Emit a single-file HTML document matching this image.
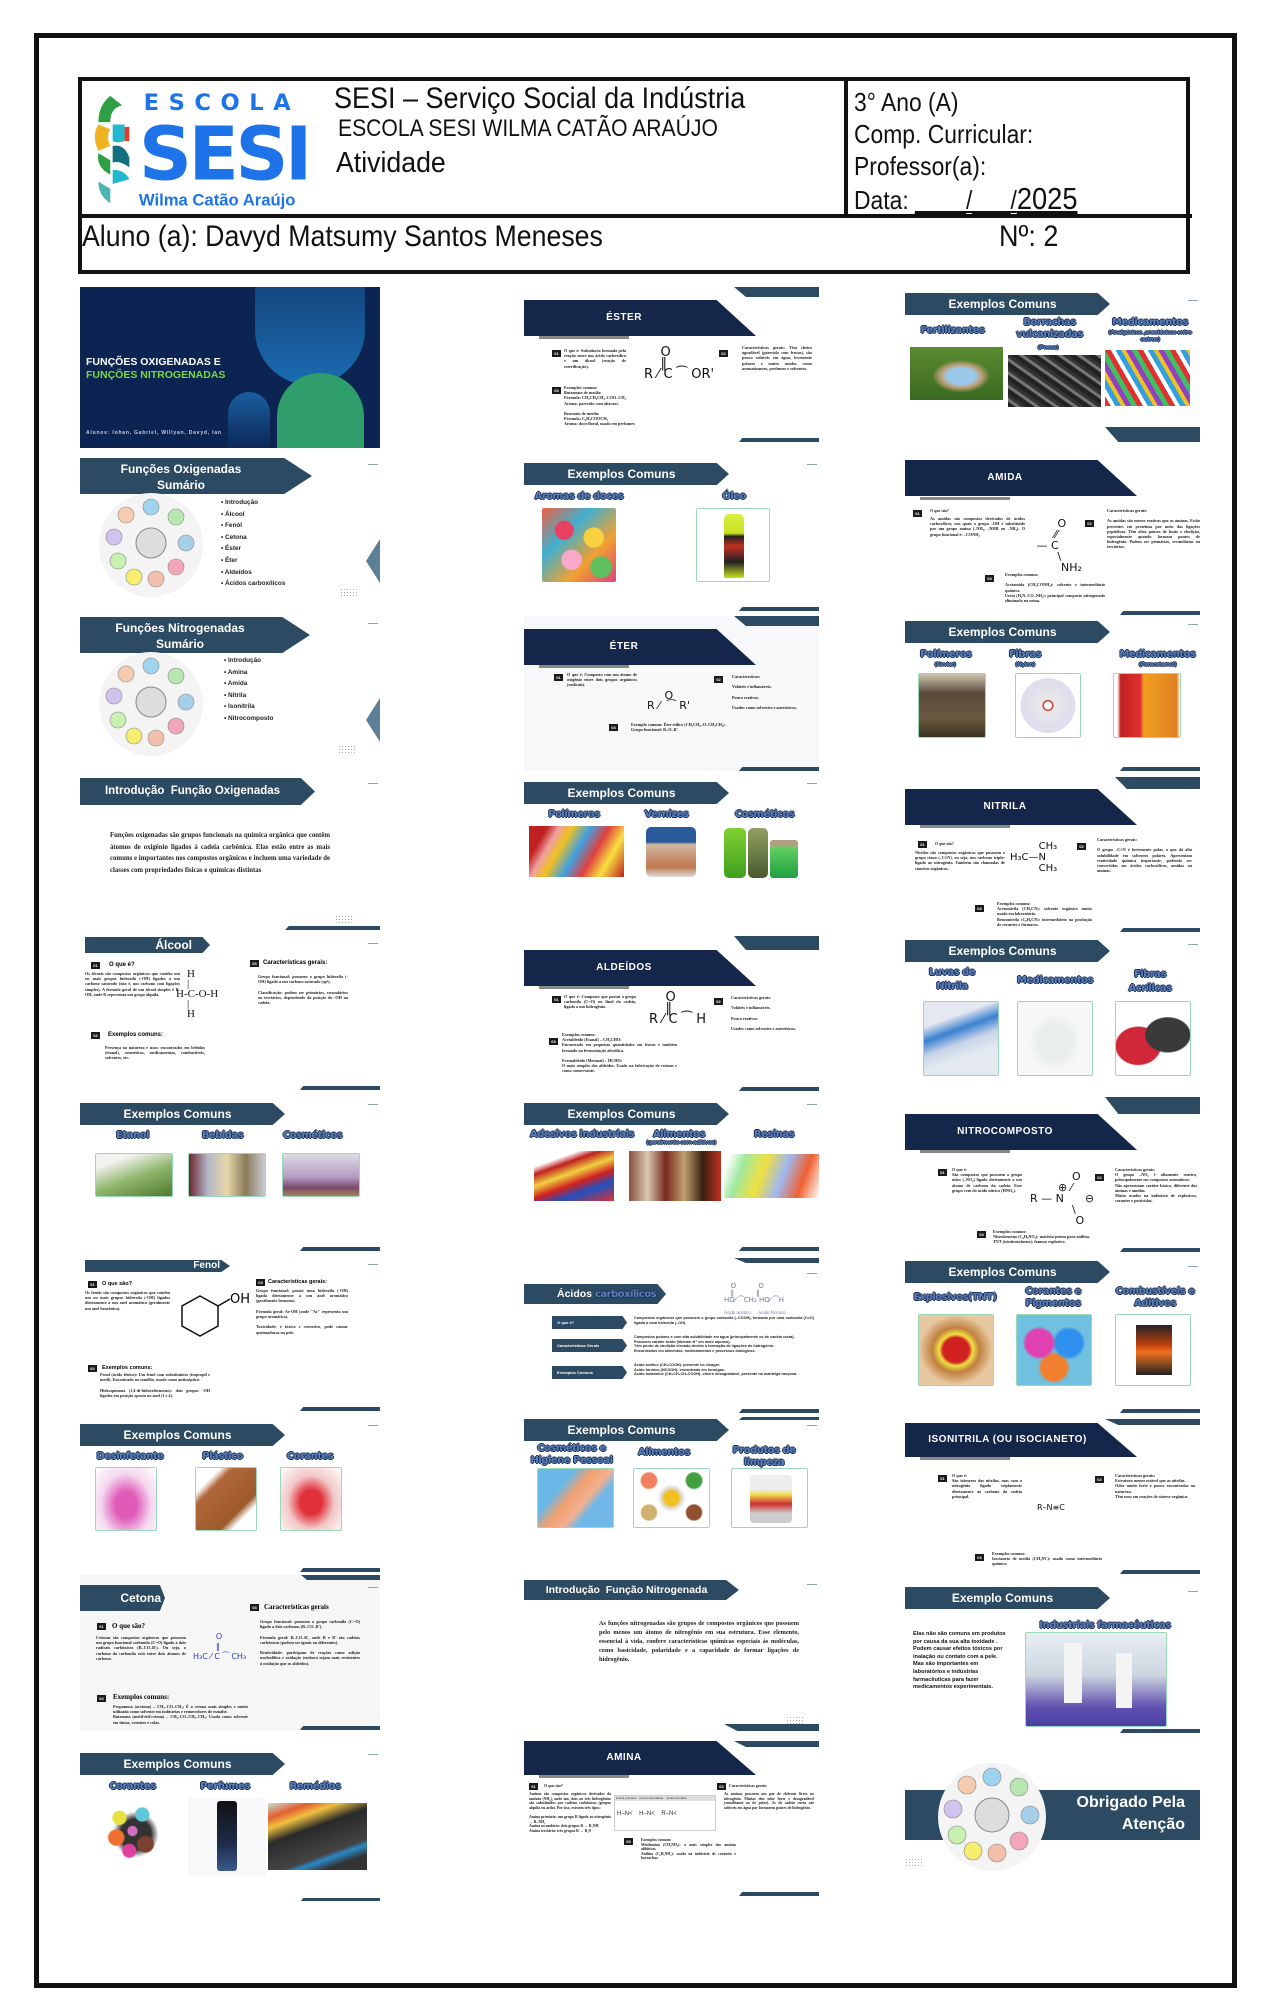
<!DOCTYPE html>
<html><head><meta charset="utf-8">
<style>
*{margin:0;padding:0;box-sizing:border-box}
body{width:1271px;height:2000px;background:#fff;position:relative;overflow:hidden;font-family:"Liberation Sans",sans-serif}
.frame{position:absolute;left:34px;top:33px;width:1203px;height:1955px;border:5px solid #111;border-top-width:5px}
.hdr{position:absolute;left:78px;top:77px;width:1112px;height:197px;border:4px solid #111}
.nar{font-family:"Liberation Sans Narrow","Liberation Sans",sans-serif;color:#111;position:absolute;white-space:nowrap;transform-origin:left top}
.s{position:absolute;height:155px;background:#fff;overflow:hidden}
.c1{left:80px;width:300px}.c2{left:524px;width:295px}.c3{left:905px;width:295px}
.tr{position:absolute;right:0;top:0;width:85px;height:10px;background:#2c4a62;clip-path:polygon(0 0,100% 0,100% 100%,14% 100%)}
.br{position:absolute;right:0;bottom:0;width:80px;height:4px;background:#2c4a62;clip-path:polygon(4% 0,100% 0,100% 100%,0 100%)}
.dash{position:absolute;right:2px;top:8px;width:10px;height:1px;background:#8aa}
.nh{position:absolute;left:0;top:13px;width:232px;height:36px;background:#14264a;clip-path:polygon(0 0,83% 0,100% 100%,0 100%);color:#fff;font-weight:bold;font-size:10px;letter-spacing:.5px}
.nh span{position:absolute;left:0;width:200px;text-align:center;top:12px}
.gb{position:absolute;left:15px;top:49px;width:90px;height:3px;background:#888}
.ban{position:absolute;left:0;top:7px;width:205px;height:22px;background:#2c4a62;clip-path:polygon(0 0,94% 0,100% 50%,94% 100%,0 100%);color:#fff;font-weight:bold;font-size:12px;text-align:center;line-height:22px;padding-right:10px}
.lb{position:absolute;font-family:"DejaVu Sans",sans-serif;font-weight:bold;font-size:10px;color:#5b80b8;text-align:center;letter-spacing:-.5px;text-shadow:-1px 0 #1e2f55,1px 0 #1e2f55,0 -1px #1e2f55,0 1px #1e2f55;line-height:11px}
.im{position:absolute;border:1px solid #9ad9b8;border-radius:2px}
.p{position:absolute;font-size:4.2px;line-height:5.2px;color:#222;font-weight:bold;text-align:justify;font-family:"Liberation Serif",serif}
.n{position:absolute;width:9px;height:7px;background:#1a1a1a;color:#fff;font-size:4px;line-height:7px;text-align:center;font-weight:bold}
.mol{position:absolute;font-size:12px;color:#111;font-family:"DejaVu Sans",sans-serif;white-space:pre;line-height:12px}
.dots{position:absolute;width:18px;height:8px;background-image:radial-gradient(#aab 0.6px,transparent 0.8px);background-size:3px 3px}
</style></head><body>
<div class="frame"></div>

<!-- HEADER -->
<div class="hdr">
 <div style="position:absolute;left:762px;top:0;width:4px;height:136px;background:#111"></div>
 <div style="position:absolute;left:0;top:133px;width:1110px;height:4px;background:#111"></div>
 <svg style="position:absolute;left:2px;top:3px" width="286" height="131" viewBox="0 0 240 110">
  <path d="M22 10 q-10 8 -10 22 l10 0 q0-12 10-14z" fill="#2ea043"/>
  <path d="M12 34 q-6 10 0 22 l10-4 q-4-8 0-14z" fill="#f0b323"/>
  <path d="M24 34 l10 0 l0 14 q-6 2-10 0z" fill="#23b8cf"/>
  <path d="M34 36 l4 0 l0 12 l-4 0z" fill="#e0402a"/>
  <path d="M24 52 q10-2 14 10 l0 8 q-8-6-14-4z" fill="#137080"/>
  <path d="M12 58 q-2 12 10 18 l0-12z" fill="#2ea043"/>
  <path d="M24 72 q10 0 14 8 l-14 4z" fill="#23b8cf"/>
  <path d="M12 82 q0 12 10 18 l0-12z" fill="#4bb7b0"/>
  <text x="50" y="22" font-family="DejaVu Sans" font-weight="bold" font-size="19" fill="#1e73e8" letter-spacing="8">ESCOLA</text>
  <text x="46" y="80" font-family="DejaVu Sans" font-weight="bold" font-size="62" fill="#1e73e8" letter-spacing="-3">SESI</text>
  <text x="46" y="102" font-family="Liberation Sans Narrow, Liberation Sans" font-weight="bold" font-size="14" fill="#1e73e8">Wilma Catão Araújo</text>
 </svg>
 <div class="nar" style="left:252px;top:1px;font-size:30px;transform:scaleX(.9)">SESI – Serviço Social da Indústria</div>
 <div class="nar" style="left:256px;top:34px;font-size:24px;transform:scaleX(.88)">ESCOLA SESI WILMA CATÃO ARAÚJO</div>
 <div class="nar" style="left:254px;top:66px;font-size:29px;transform:scaleX(.92)">Atividade</div>
 <div class="nar" style="left:772px;top:6px;font-size:26px;transform:scaleX(.88)">3° Ano (A)</div>
 <div class="nar" style="left:772px;top:38px;font-size:26px;transform:scaleX(.88)">Comp. Curricular:</div>
 <div class="nar" style="left:772px;top:70px;font-size:26px;transform:scaleX(.88)">Professor(a):</div>
 <div class="nar" style="left:772px;top:100px;font-size:26px;transform:scaleX(.88)">Data: <u>____/___/</u><span style="font-size:31px"><u>2025</u></span></div>
 <div class="nar" style="left:0;top:139px;font-size:30px;transform:scaleX(.89)">Aluno (a): Davyd Matsumy Santos Meneses</div>
 <div class="nar" style="left:917px;top:139px;font-size:30px;transform:scaleX(.9)">Nº: 2</div>
</div>

<!-- ===== COLUMN 1 ===== -->
<div class="s c1" style="top:287px;height:161px;background:#0b2452">
 <div style="position:absolute;left:175px;top:0;width:110px;height:98px;background:linear-gradient(#14477f,#1a6cb0);border-radius:0 0 55px 55px"></div>
 <div style="position:absolute;left:197px;top:86px;width:87px;height:80px;background:#2f9e6a;border-radius:44px 44px 0 0"></div>
 <div style="position:absolute;left:148px;top:105px;width:42px;height:60px;background:linear-gradient(#1a5fa0,#0b2452);border-radius:21px 21px 0 0"></div>
 <div style="position:absolute;left:6px;top:69px;color:#fff;font-weight:bold;font-size:10.5px;line-height:13px">FUNÇÕES OXIGENADAS E<br><span style="color:#7dd640">FUNÇÕES NITROGENADAS</span></div>
 <div style="position:absolute;left:6px;top:143px;color:#ccd;font-size:5px;letter-spacing:.8px;font-weight:bold">Alunos: Iohan, Gabriel, Willyan, Davyd, Ian</div>
</div>

<div class="s c1" style="top:456px">
 <div class="dash"></div>
 <div style="position:absolute;left:0;top:2px;width:232px;height:36px;background:#2c4a62;clip-path:polygon(0 0,88% 0,100% 50%,88% 100%,0 100%);color:#fff;font-weight:bold;font-size:12px;text-align:center;line-height:16px;padding:3px 30px 0 0">Funções Oxigenadas<br>Sumário</div>
 <svg style="position:absolute;left:14px;top:37px" width="115" height="105" viewBox="0 0 115 105"><circle cx="57" cy="52" r="52" fill="#f4f4f4"/><circle cx="57" cy="50" r="15" fill="#ddd" stroke="#888"/><g stroke="#888" stroke-width=".6"><circle cx="57" cy="14" r="8" fill="#9fd4f0"/><circle cx="82" cy="24" r="8" fill="#b8e6b0"/><circle cx="92" cy="50" r="8" fill="#a6d0ea"/><circle cx="82" cy="74" r="8" fill="#f2a6b8"/><circle cx="62" cy="86" r="8" fill="#f2c0aa"/><circle cx="40" cy="84" r="8" fill="#f7ee70"/><circle cx="24" cy="68" r="8" fill="#c8f0b0"/><circle cx="20" cy="44" r="8" fill="#d0c4ef"/><circle cx="32" cy="22" r="8" fill="#f7cbb0"/></g></svg>
 <div style="position:absolute;left:141px;top:41px;font-size:6.4px;font-weight:bold;line-height:11.6px;color:#222">• Introdução<br>• Álcool<br>• Fenól<br>• Cetona<br>• Éster<br>• Éter<br>• Aldeídos<br>• Ácidos carboxílicos</div>
 <div style="position:absolute;right:0;top:83px;width:14px;height:44px;background:#5a7f96;clip-path:polygon(100% 0,100% 100%,0 50%)"></div>
 <div class="dots" style="left:260px;top:132px"></div>
</div>

<div class="s c1" style="top:615px">
 <div class="dash"></div>
 <div style="position:absolute;left:0;top:2px;width:230px;height:36px;background:#2c4a62;clip-path:polygon(0 0,88% 0,100% 50%,88% 100%,0 100%);color:#fff;font-weight:bold;font-size:12px;text-align:center;line-height:16px;padding:3px 30px 0 0">Funções Nitrogenadas<br>Sumário</div>
 <svg style="position:absolute;left:14px;top:37px" width="115" height="105" viewBox="0 0 115 105"><circle cx="57" cy="52" r="52" fill="#f4f4f4"/><circle cx="57" cy="50" r="15" fill="#ddd" stroke="#888"/><g stroke="#888" stroke-width=".6"><circle cx="57" cy="14" r="8" fill="#9fd4f0"/><circle cx="82" cy="24" r="8" fill="#b8e6b0"/><circle cx="92" cy="50" r="8" fill="#a6d0ea"/><circle cx="82" cy="74" r="8" fill="#f2a6b8"/><circle cx="62" cy="86" r="8" fill="#f2c0aa"/><circle cx="40" cy="84" r="8" fill="#f7ee70"/><circle cx="24" cy="68" r="8" fill="#c8f0b0"/><circle cx="20" cy="44" r="8" fill="#d0c4ef"/><circle cx="32" cy="22" r="8" fill="#f7cbb0"/></g></svg>
 <div style="position:absolute;left:144px;top:40px;font-size:6.4px;font-weight:bold;line-height:11.6px;color:#222">• Introdução<br>• Amina<br>• Amida<br>• Nitrila<br>• Isonitrila<br>• Nitrocomposto</div>
 <div style="position:absolute;right:0;top:83px;width:14px;height:44px;background:#5a7f96;clip-path:polygon(100% 0,100% 100%,0 50%)"></div>
 <div class="dots" style="left:258px;top:130px"></div>
</div>

<div class="s c1" style="top:775px">
 <div class="dash"></div>
 <div class="ban" style="top:3px;width:235px;height:27px;line-height:27px;font-size:11.5px">Introdução&nbsp; Função Oxigenadas</div>
 <div class="p" style="left:30px;top:55px;width:220px;font-size:6.8px;line-height:11.5px">Funções oxigenadas são grupos funcionais na química orgânica que contêm átomos de oxigênio ligados à cadeia carbônica. Elas estão entre as mais comuns e importantes nos compostos orgânicos e incluem uma variedade de classes com propriedades físicas e químicas distintas</div>
 <div class="dots" style="left:255px;top:140px"></div><div class="br" style="width:95px"></div>
</div>

<div class="s c1" style="top:935px">
 <div class="dash"></div>
 <div class="ban" style="left:5px;width:125px;top:2px;height:16px;line-height:16px;text-align:right;padding-right:18px">Álcool</div>
 <div class="n" style="left:11px;top:27px">01</div><div style="position:absolute;left:29px;top:27px;font-size:6px;font-weight:bold">O que é?</div>
 <div class="p" style="left:5px;top:36px;width:95px">Os álcoois são compostos orgânicos que contêm um ou mais grupos hidroxila (-OH) ligados a um carbono saturado (isto é, um carbono com ligações simples). A fórmula geral de um álcool simples é R-OH, onde R representa um grupo alquila.</div>
 <div class="mol" style="left:96px;top:34px;font-family:'Liberation Serif',serif;font-size:11px;line-height:10px">    H
    |
H-C-O-H
    |
    H</div>
 <div class="n" style="left:170px;top:25px">03</div><div style="position:absolute;left:183px;top:25px;font-size:6px;font-weight:bold">Características gerais:</div>
 <div class="p" style="left:178px;top:39px;width:90px">Grupo funcional: possuem o grupo hidroxila (-OH) ligado a um carbono saturado (sp³).<br><br>Classificação: podem ser primários, secundários ou terciários, dependendo da posição do -OH na cadeia.</div>
 <div class="n" style="left:11px;top:97px">02</div><div style="position:absolute;left:28px;top:97px;font-size:6px;font-weight:bold">Exemplos comuns:</div>
 <div class="p" style="left:25px;top:110px;width:100px">Presença na natureza e usos: encontrados em bebidas (etanol), cosméticos, medicamentos, combustíveis, solventes, etc.</div>
 <div class="br"></div>
</div>

<div class="s c1" style="top:1096px">
 <div class="dash"></div><div class="ban">Exemplos Comuns</div>
 <div class="lb" style="left:25px;top:34px;width:55px">Etanol</div>
 <div class="lb" style="left:115px;top:34px;width:55px">Bebidas</div>
 <div class="lb" style="left:195px;top:34px;width:75px">Cosméticos</div>
 <div class="im" style="left:15px;top:57px;width:78px;height:44px;background:linear-gradient(160deg,#f2f2ef 20%,#8fb56b 55%,#4e7b2e)"></div>
 <div class="im" style="left:108px;top:57px;width:78px;height:44px;background:linear-gradient(90deg,#6b2630,#b4b8c8,#e6d6a8,#8a7a5a,#c9ccd4)"></div>
 <div class="im" style="left:202px;top:57px;width:78px;height:44px;background:linear-gradient(#dcdce6,#b59ac0 55%,#7a4a6e 80%,#a4835a)"></div>
 <div class="br"></div>
</div>

<div class="s c1" style="top:1256px">
 <div class="dash"></div>
 <div class="ban" style="left:5px;width:145px;top:4px;height:12px;line-height:12px;font-size:10px;text-align:right;padding-right:10px">Fenol</div>
 <div class="n" style="left:8px;top:25px">01</div><div style="position:absolute;left:22px;top:25px;font-size:5.5px;font-weight:bold">O que são?</div>
 <div class="p" style="left:5px;top:34px;width:85px">Os fenóis são compostos orgânicos que contêm um ou mais grupos hidroxila (-OH) ligados diretamente a um anel aromático (geralmente um anel benzênico).</div>
 <svg style="position:absolute;left:98px;top:32px" width="72" height="55"><polygon points="22,8 40,18 40,38 22,48 4,38 4,18" fill="none" stroke="#111" stroke-width="1.5"/><line x1="40" y1="18" x2="52" y2="11" stroke="#111" stroke-width="1.5"/><text x="52" y="15" font-size="13" font-family="DejaVu Sans">OH</text></svg>
 <div class="n" style="left:176px;top:23px">03</div><div style="position:absolute;left:188px;top:23px;font-size:5.5px;font-weight:bold">Características gerais:</div>
 <div class="p" style="left:176px;top:32px;width:92px">Grupo funcional: possui uma hidroxila (-OH) ligada diretamente a um anel aromático (geralmente benzeno).<br><br>Fórmula geral: Ar-OH (onde "Ar" representa um grupo aromático).<br><br>Toxicidade: é tóxico e corrosivo, pode causar queimaduras na pele.</div>
 <div class="n" style="left:8px;top:109px">02</div><div style="position:absolute;left:22px;top:109px;font-size:5.5px;font-weight:bold">Exemplos comuns:</div>
 <div class="p" style="left:20px;top:116px;width:110px">Fenol (ácido fênico): Um fenol com substituintes (isopropil e metil). Encontrado no tomilho, usado como antisséptico.<br><br>Hidroquinona (1,4-di-hidroxibenzeno): dois grupos -OH ligados em posição oposta no anel (1 e 4).</div>
 <div class="br"></div>
</div>

<div class="s c1" style="top:1417px">
 <div class="dash"></div><div class="ban">Exemplos Comuns</div>
 <div class="lb" style="left:10px;top:34px;width:80px">Desinfetante</div>
 <div class="lb" style="left:115px;top:34px;width:55px">Plástico</div>
 <div class="lb" style="left:200px;top:34px;width:60px">Corantes</div>
 <div class="im" style="left:15px;top:50px;width:62px;height:64px;background:radial-gradient(ellipse at 50% 60%,#e05ab8 25%,#f4d8ef 60%,#fff)"></div>
 <div class="im" style="left:115px;top:50px;width:62px;height:64px;background:linear-gradient(135deg,#fff 20%,#b0683a 30%,#9c5a2a 70%,#fff 80%)"></div>
 <div class="im" style="left:200px;top:50px;width:62px;height:64px;background:radial-gradient(ellipse at 50% 55%,#e0303a 25%,#f2c8c8 55%,#fff)"></div>
 <div class="br"></div>
</div>

<div class="s c1" style="top:1575px;background:#f6f6f7">
 <div class="tr" style="top:-5px"></div><div class="dash" style="top:12px"></div>
 <div class="ban" style="left:0;top:10px;width:85px;height:26px;line-height:26px;font-size:12px;text-align:right;padding-right:4px">Cetona</div>
 <div class="n" style="left:17px;top:48px">01</div><div style="position:absolute;left:32px;top:47px;font-size:7px;font-family:'Liberation Serif',serif;font-weight:bold">O que são?</div>
 <div class="p" style="left:16px;top:60px;width:90px">Cetonas são compostos orgânicos que possuem um grupo funcional carbonila (C=O) ligado a dois radicais carbônicos (R–CO–R'). Ou seja, o carbono da carbonila está entre dois átomos de carbono.</div>
 <div class="mol" style="left:113px;top:57px;color:#2a39b8;font-size:8px;line-height:10px">         O
         ‖
H₃C ⁄ C ⁀ CH₃</div>
 <div class="n" style="left:170px;top:29px">03</div><div style="position:absolute;left:184px;top:28px;font-size:7px;font-family:'Liberation Serif',serif;font-weight:bold">Características gerais</div>
 <div class="p" style="left:180px;top:44px;width:100px">Grupo funcional: possuem o grupo carbonila (C=O) ligado a dois carbonos (R–CO–R').<br><br>Fórmula geral: R–CO–R', onde R e R' são cadeias carbônicas (podem ser iguais ou diferentes).<br><br>Reatividade: participam de reações como adição nucleofílica e oxidação (embora sejam mais resistentes à oxidação que os aldeídos).</div>
 <div class="n" style="left:17px;top:120px">02</div><div style="position:absolute;left:33px;top:118px;font-size:7px;font-family:'Liberation Serif',serif;font-weight:bold">Exemplos comuns:</div>
 <div class="p" style="left:33px;top:129px;width:135px">Propanona (acetona) – CH₃–CO–CH₃: É a cetona mais simples e muito utilizada como solvente em indústrias e removedores de esmalte.<br>Butanona (metil-etil-cetona) – CH₃–CO–CH₂–CH₃: Usada como solvente em tintas, vernizes e colas.</div>
 <div class="br"></div>
</div>

<div class="s c1" style="top:1746px">
 <div class="dash"></div><div class="ban">Exemplos Comuns</div>
 <div class="lb" style="left:25px;top:35px;width:55px">Corantes</div>
 <div class="lb" style="left:115px;top:35px;width:60px">Perfumes</div>
 <div class="lb" style="left:205px;top:35px;width:60px">Remédios</div>
 <div style="position:absolute;left:20px;top:52px;width:65px;height:66px;background:radial-gradient(circle at 30% 30%,#e8e040 10%,transparent 12%),radial-gradient(circle at 65% 25%,#60c8d8 10%,transparent 12%),radial-gradient(circle at 25% 60%,#f07030 12%,transparent 14%),radial-gradient(circle at 50% 50%,#d070c0 10%,transparent 12%),radial-gradient(circle at 70% 70%,#7a4030 12%,transparent 14%),radial-gradient(circle at 45% 80%,#e040a0 10%,transparent 12%),radial-gradient(circle at 55% 55%,#333 30%,transparent 45%)"></div>
 <div style="position:absolute;left:108px;top:52px;width:78px;height:78px;background:#f8f8fa"><div style="position:absolute;left:29px;top:3px;width:20px;height:70px;border-radius:3px;background:linear-gradient(#111,#1d2a4a 60%,#3a5a8a)"></div></div>
 <div style="position:absolute;left:188px;top:57px;width:99px;height:67px;background:linear-gradient(160deg,#c8e0d8 0%,#e06030 15%,#efc040 25%,#2a2a2a 40%,#444 70%,#2a88c8 75%,#333 85%)"></div>
 <div class="br" style="bottom:-1px"></div>
</div>

<!-- ===== COLUMN 2 ===== -->
<div class="s c2" style="top:287px">
 <div class="tr" style="top:0"></div>
 <div class="nh"><span>ÉSTER</span></div><div class="gb"></div>
 <div class="n" style="left:28px;top:63px">01</div><div class="p" style="left:40px;top:61px;width:62px">O que é: Substância formada pela reação entre um ácido carboxílico e um álcool (reação de esterificação).</div>
 <div class="mol" style="left:120px;top:60px;font-size:13px;line-height:11px">    O
    ‖
R ⁄ C ⁀ OR'</div>
 <div class="n" style="left:195px;top:63px">02</div><div class="p" style="left:218px;top:58px;width:70px">Características gerais: Têm cheiro agradável (parecido com frutas), são pouco solúveis em água, levemente polares e muito usados como aromatizantes, perfumes e solventes.</div>
 <div class="n" style="left:28px;top:100px">03</div><div class="p" style="left:40px;top:98px;width:100px">Exemplos comuns:<br>Butanoato de metila:<br>Fórmula: CH₃CH₂CH₂–COO–CH₃<br>Aroma: parecido com abacaxi.<br><br>Benzoato de metila:<br>Fórmula: C₆H₅COOCH₃<br>Aroma: doce/floral, usado em perfumes</div>
 <div class="br"></div>
</div>

<div class="s c2" style="top:456px">
 <div class="dash"></div><div class="ban">Exemplos Comuns</div>
 <div class="lb" style="left:0;top:35px;width:110px">Aromas de doces</div>
 <div class="lb" style="left:185px;top:35px;width:50px">Óleo</div>
 <div class="im" style="left:18px;top:52px;width:74px;height:74px;border:none;background:radial-gradient(circle at 30% 30%,#e84060 12%,transparent 14%),radial-gradient(circle at 70% 40%,#f8d040 14%,transparent 16%),radial-gradient(circle at 40% 70%,#f8a8c8 14%,transparent 16%),radial-gradient(circle at 80% 80%,#60c060 12%,transparent 14%),linear-gradient(135deg,#f06040,#40b0d0,#f0a030,#e04080)"></div>
 <div class="im" style="left:172px;top:52px;width:74px;height:74px;background:#fff"><div style="position:absolute;left:27px;top:5px;width:20px;height:64px;border-radius:5px 5px 2px 2px;background:linear-gradient(#d8f040,#c8e020 30%,#222 35%,#c03020 50%,#222 75%,#c8e020)"></div></div>
 <div class="br"></div>
</div>

<div class="s c2" style="top:616px;background:#f7f8fa">
 <div class="tr"></div>
 <div class="nh"><span>ÉTER</span></div><div class="gb"></div>
 <div class="n" style="left:30px;top:58px">01</div><div class="p" style="left:43px;top:56px;width:70px">O que é: Composto com um átomo de oxigênio entre dois grupos orgânicos (radicais).</div>
 <div class="mol" style="left:123px;top:75px;font-size:11px;line-height:10px">     O
R ⁄  ⁀ R'</div>
 <div class="n" style="left:190px;top:60px">02</div><div class="p" style="left:208px;top:58px;width:70px">Características:<br><br>Voláteis e inflamáveis.<br><br>Pouco reativos.<br><br>Usados como solventes e anestésicos.</div>
 <div class="n" style="left:85px;top:108px">03</div><div class="p" style="left:107px;top:106px;width:100px">Exemplo comum: Éter etílico (CH₃CH₂–O–CH₂CH₃).<br>Grupo funcional: R–O–R'</div>
 <div class="br"></div>
</div>

<div class="s c2" style="top:775px">
 <div class="dash"></div><div class="ban">Exemplos Comuns</div>
 <div class="lb" style="left:20px;top:34px;width:60px">Polímeros</div>
 <div class="lb" style="left:115px;top:34px;width:55px">Vernizes</div>
 <div class="lb" style="left:203px;top:34px;width:75px">Cosméticos</div>
 <div style="position:absolute;left:5px;top:51px;width:95px;height:51px;background:linear-gradient(120deg,#c02020 15%,#f0a0a0 25%,#f0c020 35%,#40a0e0 50%,#e04040 65%,#f8e040 80%,#c02020)"></div>
 <div style="position:absolute;left:122px;top:52px;width:50px;height:50px;border-radius:5px;background:linear-gradient(#2a5a9a 30%,#d0b8a0 35%,#c07850 80%,#ddd)"></div>
 <div style="position:absolute;left:200px;top:53px;width:22px;height:50px;border-radius:5px;background:linear-gradient(#80d030,#40a020)"></div>
 <div style="position:absolute;left:224px;top:53px;width:20px;height:50px;border-radius:5px;background:linear-gradient(#90a060,#4a5a30)"></div>
 <div style="position:absolute;left:246px;top:65px;width:28px;height:38px;border-radius:3px;background:linear-gradient(#b0a080 15%,#60d060 20%,#20a040)"></div>
</div>

<div class="s c2" style="top:936px">
 <div class="tr" style="top:0;height:14px"></div>
 <div class="nh" style="top:14px"><span>ALDEÍDOS</span></div><div class="gb" style="top:50px"></div>
 <div class="n" style="left:28px;top:60px">01</div><div class="p" style="left:40px;top:58px;width:72px">O que é: Composto que possui o grupo carbonila (C=O) no final da cadeia, ligado a um hidrogênio.</div>
 <div class="mol" style="left:125px;top:56px;font-size:13px;line-height:11px">    O
    ‖
R ⁄ C ⁀ H</div>
 <div class="n" style="left:190px;top:62px">02</div><div class="p" style="left:207px;top:59px;width:70px">Características gerais:<br><br>Voláteis e inflamáveis.<br><br>Pouco reativos.<br><br>Usados como solventes e anestésicos.</div>
 <div class="n" style="left:25px;top:102px">03</div><div class="p" style="left:38px;top:96px;width:115px">Exemplos comuns:<br>Acetaldeído (Etanal) – CH₃CHO:<br>Encontrado em pequenas quantidades em frutas e também formado na fermentação alcoólica.<br><br>Formaldeído (Metanal) – HCHO:<br>O mais simples dos aldeídos. Usado na fabricação de resinas e como conservante.</div>
 <div class="br"></div>
</div>

<div class="s c2" style="top:1096px">
 <div class="dash"></div><div class="ban">Exemplos Comuns</div>
 <div class="lb" style="left:2px;top:33px;width:112px">Adesivos industriais</div>
 <div class="lb" style="left:125px;top:33px;width:60px">Alimentos</div>
 <div class="lb" style="left:112px;top:44px;width:90px;font-size:5.5px;line-height:6px">(geralmente com aditivos)</div>
 <div class="lb" style="left:225px;top:33px;width:50px">Resinas</div>
 <div style="position:absolute;left:10px;top:55px;width:80px;height:50px;background:linear-gradient(160deg,#fff 20%,#c02020 30%,#f0d040 45%,#d02020 60%,#2050c0 75%,#e03030)"></div>
 <div style="position:absolute;left:105px;top:55px;width:92px;height:50px;background:linear-gradient(90deg,#8a5040,#d8c8b0,#7a2a20,#c0a070,#3a2010,#c03020)"></div>
 <div style="position:absolute;left:200px;top:58px;width:95px;height:44px;background:linear-gradient(110deg,#fff 5%,#a0e8a0 20%,#f0e040 40%,#a0b8f0 60%,#f06030 80%,#fff)"></div>
 <div class="br"></div>
</div>

<div class="s c2" style="top:1258px">
 <div class="tr" style="height:5px"></div><div class="dash" style="top:15px"></div>
 <div class="ban" style="top:26px;width:142px;height:20px;line-height:20px;font-size:10.5px;text-align:left;padding-left:33px;white-space:nowrap">Ácidos <span class="lb" style="position:static;font-size:10px">carboxílicos</span></div>
 <div class="mol" style="left:200px;top:25px;color:#6a7aa8;font-size:7px;line-height:7px">   O          O
   ‖          ‖
HO⁄ ⁀CH₂ HO⁄ ⁀H</div>
 <div style="position:absolute;left:200px;top:52px;font-size:4.5px;color:#6a7aa8">Ácido acético &nbsp;&nbsp;&nbsp;&nbsp; Ácido fórmico</div>
 <div class="ban" style="left:28px;top:58px;width:75px;height:13px;line-height:13px;font-size:4px;text-align:left;padding-left:5px">O que é?</div>
 <div class="ban" style="left:28px;top:81px;width:75px;height:13px;line-height:13px;font-size:4px;text-align:left;padding-left:5px">Características Gerais</div>
 <div class="ban" style="left:28px;top:108px;width:75px;height:13px;line-height:13px;font-size:4px;text-align:left;padding-left:5px">Exemplos Comuns</div>
 <div class="p" style="left:110px;top:58px;width:180px;font-size:3.8px;line-height:4.6px;font-family:'Liberation Sans',sans-serif">Compostos orgânicos que possuem o grupo carboxila (–COOH), formado por uma carbonila (C=O) ligada a uma hidroxila (–OH).</div>
 <div class="p" style="left:110px;top:77px;width:180px;font-size:3.8px;line-height:4.6px;font-family:'Liberation Sans',sans-serif">Compostos polares e com alta solubilidade em água (principalmente os de cadeia curta).<br>Possuem caráter ácido (liberam H⁺ em meio aquoso).<br>Têm ponto de ebulição elevado devido à formação de ligações de hidrogênio.<br>Encontrados em alimentos, medicamentos e processos biológicos.</div>
 <div class="p" style="left:110px;top:105px;width:180px;font-size:3.8px;line-height:4.6px;font-family:'Liberation Sans',sans-serif">Ácido acético (CH₃COOH): presente no vinagre.<br>Ácido fórmico (HCOOH): encontrado em formigas.<br>Ácido butanoico (CH₃CH₂CH₂COOH): cheiro desagradável, presente na manteiga rançosa.</div>
 <div class="br"></div>
</div>

<div class="s c2" style="top:1417px">
 <div class="dash"></div><div class="ban" style="top:2px">Exemplos Comuns</div>
 <div class="lb" style="left:5px;top:26px;width:85px;line-height:12px">Cosméticos e Higiene Pessoal</div>
 <div class="lb" style="left:110px;top:30px;width:60px">Alimentos</div>
 <div class="lb" style="left:205px;top:28px;width:70px;line-height:12px">Produtos de limpeza</div>
 <div class="im" style="left:13px;top:51px;width:77px;height:60px;background:linear-gradient(130deg,#6ab8e8 30%,#f0a070 45%,#f3b090 60%,#70b8e8 70%)"></div>
 <div class="im" style="left:109px;top:51px;width:77px;height:60px;background:radial-gradient(circle,#f0c020 15%,#ddd 22%,#fff 30%,transparent 31%),radial-gradient(circle at 20% 20%,#f08060 10%,transparent 12%),radial-gradient(circle at 80% 20%,#40a040 10%,transparent 12%),radial-gradient(circle at 20% 75%,#d0b070 10%,transparent 12%),radial-gradient(circle at 80% 75%,#905030 10%,transparent 12%),#fff"></div>
 <div class="im" style="left:207px;top:51px;width:77px;height:60px;background:#fff"><div style="position:absolute;left:18px;top:6px;width:42px;height:48px;border-radius:4px;background:linear-gradient(#eee 30%,#f0e050 40%,#d03030 60%,#ccc 80%)"></div></div>
 <div class="br" style="bottom:auto;top:0;height:3px"></div>
</div>

<div class="s c2" style="top:1576px">
 <div class="dash"></div>
 <div class="ban" style="top:4px;width:215px;height:20px;line-height:20px;font-size:10.5px">Introdução&nbsp; Função Nitrogenada</div>
 <div class="p" style="left:75px;top:43px;width:200px;font-size:6.3px;line-height:9px">As funções nitrogenadas são grupos de compostos orgânicos que possuem pelo menos um átomo de nitrogênio em sua estrutura. Esse elemento, essencial à vida, confere características químicas especiais às moléculas, como basicidade, polaridade e a capacidade de formar ligações de hidrogênio.</div>
 <div class="dots" style="left:262px;top:140px"></div>
 <div class="tr" style="top:auto;bottom:0;height:7px;width:95px"></div>
</div>

<div class="s c2" style="top:1741px">
 <div class="tr" style="height:6px"></div>
 <div class="nh" style="top:0;height:34px"><span style="top:11px">AMINA</span></div><div class="gb" style="top:34px;width:90px"></div>
 <div class="n" style="left:5px;top:42px">01</div><div class="p" style="left:20px;top:42px;font-size:4px">O que são?</div>
 <div class="p" style="left:5px;top:51px;width:82px;font-size:3.8px;line-height:4.6px">Aminas são compostos orgânicos derivados da amônia (NH₃), onde um, dois ou três hidrogênios são substituídos por cadeias carbônicas (grupos alquila ou arila). Por isso, existem três tipos:<br><br>Amina primária: um grupo R ligado ao nitrogênio → R–NH₂<br>Amina secundária: dois grupos R → R₂NH<br>Amina terciária: três grupos R → R₃N</div>
 <div style="position:absolute;left:90px;top:54px;width:102px;height:36px;border:.5px solid #ccc;font-size:6px;color:#333"><div style="background:#ddd;height:5px;font-size:3px;line-height:5px">&nbsp;Amina primária &nbsp;&nbsp; Amina secundária &nbsp;&nbsp; Amina terciária</div><div style="padding:10px 2px;white-space:nowrap">H–N&lt; &nbsp;&nbsp; H–N&lt; &nbsp;&nbsp; R–N&lt;</div></div>
 <div class="n" style="left:193px;top:42px">02</div><div class="p" style="left:205px;top:42px;font-size:4px">Características gerais:</div>
 <div class="p" style="left:200px;top:51px;width:90px;font-size:3.8px;line-height:4.6px">As aminas possuem um par de elétrons livres no nitrogênio. Muitas têm odor forte e desagradável (semelhante ao de peixe). As de cadeia curta são solúveis em água por formarem pontes de hidrogênio.</div>
 <div class="n" style="left:100px;top:97px">03</div><div class="p" style="left:117px;top:97px;width:95px;font-size:3.8px;line-height:4.6px">Exemplos comuns:<br>Metilamina (CH₃NH₂): a mais simples das aminas alifáticas.<br>Anilina (C₆H₅NH₂): usada na indústria de corantes e borrachas.</div>
 <div class="br"></div>
</div>

<!-- ===== COLUMN 3 ===== -->
<div class="s c3" style="top:287px">
 <div class="dash" style="top:13px"></div><div class="ban" style="top:6px">Exemplos Comuns</div>
 <div class="lb" style="left:10px;top:38px;width:75px">Fertilizantes</div>
 <div class="lb" style="left:102px;top:30px;width:85px;line-height:12px">Borrachas vulcanizadas</div>
 <div class="lb" style="left:123px;top:56px;width:40px;font-size:5.5px">(Pneus)</div>
 <div class="lb" style="left:195px;top:30px;width:100px">Medicamentos</div>
 <div class="lb" style="left:195px;top:43px;width:100px;font-size:5.5px;line-height:7px">(Analgésicos ,anestésicos entre outros)</div>
 <div style="position:absolute;left:5px;top:60px;width:93px;height:53px;background:radial-gradient(ellipse at 55% 55%,#9ac8e8 20%,#c0a078 28%,transparent 40%),linear-gradient(#5a8a30,#3a6a20)"></div>
 <div style="position:absolute;left:103px;top:68px;width:93px;height:52px;background:repeating-linear-gradient(35deg,#222 0 4px,#777 5px 7px,#333 8px 11px)"></div>
 <div style="position:absolute;left:200px;top:63px;width:85px;height:56px;background:repeating-linear-gradient(60deg,#e03030 0 5px,#fff 5px 9px,#30a0e0 9px 14px,#f0c020 14px 18px,#9040c0 18px 23px,#40c060 23px 28px)"></div>
 <div class="tr" style="top:auto;bottom:0;height:15px;width:95px"></div>
</div>

<div class="s c3" style="top:460px">
 <div class="nh" style="top:0"><span>AMIDA</span></div><div class="gb" style="top:37px"></div>
 <div class="n" style="left:8px;top:50px">01</div><div class="p" style="left:25px;top:48px;font-size:4px">O que são?</div>
 <div class="p" style="left:25px;top:56px;width:95px">As amidas são compostos derivados de ácidos carboxílicos, nos quais o grupo –OH é substituído por um grupo amina (–NH₂, –NHR ou –NR₂). O grupo funcional é: –CONH₂</div>
 <div class="mol" style="left:128px;top:58px;font-size:11px;line-height:11px">       O
      ⁄⁄
 — C
       \
        NH₂</div>
 <div class="n" style="left:180px;top:60px">02</div><div class="p" style="left:202px;top:48px;width:93px">Características gerais:<br><br>As amidas são menos reativas que as aminas. Estão presentes em proteínas por meio das ligações peptídicas. Têm altos pontos de fusão e ebulição, especialmente quando formam pontes de hidrogênio. Podem ser primárias, secundárias ou terciárias.</div>
 <div class="n" style="left:80px;top:115px">03</div><div class="p" style="left:100px;top:112px;width:100px">Exemplos comuns:<br><br>Acetamida (CH₃CONH₂): solvente e intermediário químico.<br>Ureia (H₂N–CO–NH₂): principal composto nitrogenado eliminado na urina.</div>
 <div class="br"></div>
</div>

<div class="s c3" style="top:616px">
 <div class="dash"></div><div class="ban" style="top:5px">Exemplos Comuns</div>
 <div class="lb" style="left:15px;top:34px;width:50px;line-height:9px">Polímeros<br><span style="font-size:5.5px">(Kevlar)</span></div>
 <div class="lb" style="left:100px;top:34px;width:40px;line-height:9px">Fibras<br><span style="font-size:5.5px">(Nylon)</span></div>
 <div class="lb" style="left:210px;top:34px;width:85px;line-height:9px">Medicamentos<br><span style="font-size:5.5px">(Paracetamol)</span></div>
 <div class="im" style="left:13px;top:57px;width:68px;height:65px;background:linear-gradient(#cfc5b0,#5a4a3a 30%,#6a5a40 70%,#3a3020)"></div>
 <div class="im" style="left:110px;top:57px;width:66px;height:65px;background:radial-gradient(circle,#fff 8%,#c02020 10%,#e8e8e8 14%,#dde 60%,#fff 62%)"></div>
 <div class="im" style="left:208px;top:57px;width:68px;height:65px;background:linear-gradient(90deg,#fff 5%,#c02020 10%,#e03030 40%,#f0a020 45%,#e08020 95%,#fff)"></div>
 <div class="br"></div>
</div>

<div class="s c3" style="top:777px">
 <div class="tr" style="height:12px"></div>
 <div class="nh" style="top:12px"><span>NITRILA</span></div><div class="gb" style="top:48px"></div>
 <div class="n" style="left:13px;top:64px">01</div><div class="p" style="left:30px;top:64px;font-size:4px">O que são?</div>
 <div class="p" style="left:10px;top:73px;width:90px">Nitrilas são compostos orgânicos que possuem o grupo ciano (–C≡N), ou seja, um carbono triplo-ligado ao nitrogênio. Também são chamadas de cianetos orgânicos.</div>
 <div class="mol" style="left:105px;top:64px;font-size:10px;line-height:11px">         CH₃
H₃C—N
         CH₃</div>
 <div class="n" style="left:172px;top:66px">02</div><div class="p" style="left:192px;top:60px;width:95px">Características gerais:<br><br>O grupo –C≡N é fortemente polar, o que dá alta solubilidade em solventes polares. Apresentam reatividade química importante, podendo ser convertidas em ácidos carboxílicos, amidas ou aminas.</div>
 <div class="n" style="left:70px;top:128px">03</div><div class="p" style="left:92px;top:124px;width:95px">Exemplos comuns:<br>Acetonitrila (CH₃CN): solvente orgânico muito usado em laboratório.<br>Benzonitrila (C₆H₅CN): intermediário na produção de corantes e fármacos.</div>
 <div class="br"></div>
</div>

<div class="s c3" style="top:938px">
 <div class="dash" style="top:6px"></div><div class="ban" style="top:2px">Exemplos Comuns</div>
 <div class="lb" style="left:22px;top:28px;width:50px;line-height:14px">Luvas de Nitrila</div>
 <div class="lb" style="left:105px;top:37px;width:90px">Medicamentos</div>
 <div class="lb" style="left:220px;top:30px;width:50px;line-height:14px">Fibras Acrílicas</div>
 <div class="im" style="left:18px;top:63px;width:76px;height:75px;background:linear-gradient(160deg,#e4e8f0 25%,#3a80d0 40%,#c8d4e8 55%,#e4e8f0 70%)"></div>
 <div class="im" style="left:112px;top:63px;width:76px;height:75px;background:radial-gradient(ellipse at 50% 55%,#e8eeea 30%,#f6f7f6 50%)"></div>
 <div class="im" style="left:210px;top:63px;width:76px;height:75px;background:radial-gradient(ellipse at 70% 45%,#3a3a3a 30%,transparent 32%),radial-gradient(ellipse at 30% 60%,#d02838 30%,transparent 32%),#fff"></div>
</div>

<div class="s c3" style="top:1097px">
 <div class="tr" style="height:17px;top:0;width:95px"></div>
 <div class="nh" style="top:17px"><span>NITROCOMPOSTO</span></div><div class="gb" style="top:53px"></div>
 <div class="n" style="left:33px;top:72px">01</div><div class="p" style="left:47px;top:70px;width:70px">O que é:<br>São compostos que possuem o grupo nitro (–NO₂) ligado diretamente a um átomo de carbono da cadeia. Esse grupo vem do ácido nítrico (HNO₃).</div>
 <div class="mol" style="left:125px;top:74px;font-size:11px;line-height:11px">            O
        ⊕ ⁄
R — N      ⊖
            \
             O</div>
 <div class="n" style="left:190px;top:77px">02</div><div class="p" style="left:210px;top:70px;width:82px">Características gerais:<br>O grupo –NO₂ é altamente reativo, principalmente em compostos aromáticos.<br>Não apresentam caráter básico, diferente das aminas e amidas.<br>Muito usados na indústria de explosivos, corantes e pesticidas.</div>
 <div class="n" style="left:72px;top:134px">03</div><div class="p" style="left:88px;top:132px;width:115px">Exemplos comuns:<br>Nitrobenzeno (C₆H₅NO₂): matéria-prima para anilina.<br>TNT (trinitrotolueno): famoso explosivo.</div>
 <div class="br"></div>
</div>

<div class="s c3" style="top:1258px">
 <div class="dash"></div><div class="ban" style="top:3px">Exemplos Comuns</div>
 <div class="lb" style="left:5px;top:34px;width:90px">Explosivos(TNT)</div>
 <div class="lb" style="left:118px;top:28px;width:60px;line-height:12px">Corantes e Pigmentos</div>
 <div class="lb" style="left:210px;top:28px;width:80px;line-height:12px">Combustíveis e Aditivos</div>
 <div class="im" style="left:13px;top:56px;width:76px;height:72px;background:radial-gradient(ellipse at 50% 50%,#d02020 25%,#f0e040 32%,#c08040 45%,#e8c8a0 70%)"></div>
 <div class="im" style="left:111px;top:56px;width:76px;height:72px;background:radial-gradient(circle at 30% 40%,#e040b0 20%,transparent 25%),radial-gradient(circle at 70% 40%,#3090f0 20%,transparent 25%),radial-gradient(circle at 50% 75%,#f08030 20%,transparent 25%),#70c0e0"></div>
 <div class="im" style="left:210px;top:56px;width:76px;height:72px;background:#fff"><div style="position:absolute;left:20px;top:10px;width:36px;height:50px;background:linear-gradient(#222,#c04010 40%,#f07020 55%,#222)"></div></div>
 <div class="br"></div>
</div>

<div class="s c3" style="top:1419px">
 <div class="tr" style="width:95px;height:6px"></div>
 <div class="nh" style="top:4px;height:34px"><span style="top:11px;left:0;width:205px">ISONITRILA (OU ISOCIANETO)</span></div><div class="gb" style="top:38px"></div>
 <div class="n" style="left:33px;top:56px">01</div><div class="p" style="left:47px;top:54px;width:70px">O que é:<br>São isômeros das nitrilas, mas com o nitrogênio ligado triplamente diretamente ao carbono da cadeia principal.</div>
 <div class="mol" style="left:132px;top:83px;font-size:8px">R–N≡C</div>
 <div class="n" style="left:190px;top:57px">02</div><div class="p" style="left:210px;top:54px;width:80px">Características gerais:<br>Estrutura menos estável que as nitrilas.<br>Odor muito forte e pouco encontradas na natureza.<br>Têm usos em reações de síntese orgânica.</div>
 <div class="n" style="left:70px;top:135px">03</div><div class="p" style="left:87px;top:132px;width:110px">Exemplos comuns:<br>Isocianeto de metila (CH₃NC): usado como intermediário químico.</div>
 <div class="br"></div>
</div>

<div class="s c3" style="top:1580px">
 <div class="dash" style="top:11px"></div>
 <div class="ban" style="top:7px;width:205px">Exemplo Comuns</div>
 <div class="lb" style="left:125px;top:40px;width:150px">Industriais farmacêuticas</div>
 <div style="position:absolute;left:8px;top:51px;width:98px;font-size:5.6px;line-height:7.6px;color:#111;font-weight:bold">Elas não são comuns em produtos por causa da sua alta toxidade .<br>Podem causar efeitos tóxicos por inalação ou contato com a pele.<br>Mas são importantes em laboratórios e indústrias farmacêuticas para fazer medicamentos experimentais.</div>
 <div class="im" style="left:120px;top:52px;width:142px;height:95px;background:linear-gradient(180deg,#e8eef4 0%,#cdd6e0 45%,#6050b0 80%,#4a40a0)"><div style="position:absolute;left:38px;top:10px;width:18px;height:60px;background:#f4f4f4"></div><div style="position:absolute;left:90px;top:20px;width:16px;height:55px;background:#f4f4f4"></div></div>
 <div class="br" style="bottom:2px"></div>
</div>

<div class="s c3" style="top:1740px">
 <div style="position:absolute;left:0;top:50px;width:295px;height:50px;background:#2c4a62"></div>
 <svg style="position:absolute;left:30px;top:20px" width="115" height="115" viewBox="0 0 115 105"><circle cx="57" cy="52" r="54" fill="#f4f4f4"/><circle cx="57" cy="50" r="17" fill="#ddd" stroke="#888"/><g stroke="#888" stroke-width=".6"><circle cx="57" cy="12" r="9" fill="#9fd4f0"/><circle cx="84" cy="22" r="9" fill="#b8e6b0"/><circle cx="95" cy="50" r="9" fill="#a6d0ea"/><circle cx="84" cy="76" r="9" fill="#f2a6b8"/><circle cx="62" cy="88" r="9" fill="#f2c0aa"/><circle cx="38" cy="86" r="9" fill="#f7ee70"/><circle cx="22" cy="70" r="9" fill="#c8f0b0"/><circle cx="18" cy="44" r="9" fill="#d0c4ef"/><circle cx="32" cy="20" r="9" fill="#f7cbb0"/></g></svg>
 <div style="position:absolute;left:130px;top:52px;width:150px;color:#fff;font-weight:bold;font-size:16px;line-height:22px;text-align:right">Obrigado Pela<br>Atenção</div>
 <div class="dots" style="left:0;top:118px"></div>
</div>

</body></html>
